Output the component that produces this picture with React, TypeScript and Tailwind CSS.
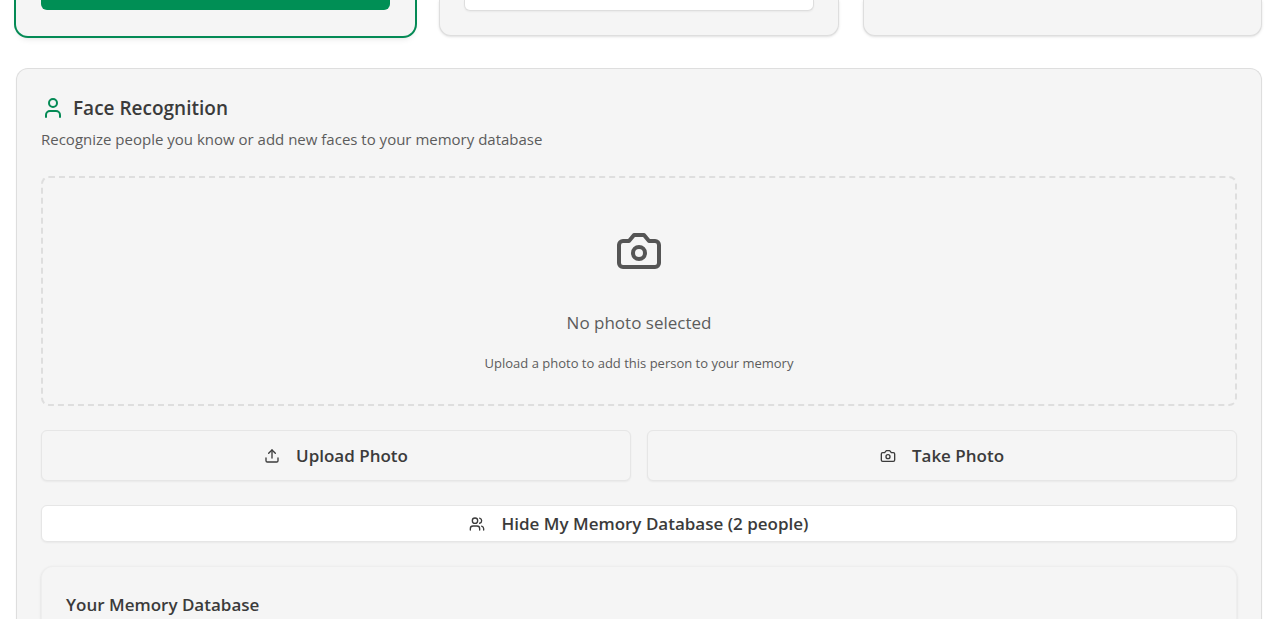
import type { ReactNode } from "react";
import { Upload, User, Users } from "lucide-react";

function CameraIcon({ className }: { className?: string }) {
  return (
    <svg
      viewBox="0 0 24 24"
      fill="none"
      stroke="currentColor"
      strokeWidth="2"
      strokeLinecap="round"
      strokeLinejoin="round"
      className={className}
      aria-hidden="true"
    >
      <path d="M14.5 4h-5L7 7H4a2 2 0 0 0-2 2v9a2 2 0 0 0 2 2h16a2 2 0 0 0 2-2V9a2 2 0 0 0-2-2h-3l-2.5-3z" />
      <circle cx="12" cy="13" r="3" />
    </svg>
  );
}

function ActionButton({ icon, label }: { icon: ReactNode; label: string }) {
  return (
    <button
      type="button"
      className="flex flex-1 items-center justify-center gap-4 rounded-md border border-[#e6e6e6] bg-[#f5f5f5] py-3 text-[17px] leading-[25px] font-semibold shadow-xs hover:bg-white"
    >
      {icon}
      {label}
    </button>
  );
}

export default function App() {
  return (
    <main className="flex min-h-screen flex-col gap-8 bg-white pr-[18px] pl-4 font-['Open_Sans','Noto_Sans',sans-serif] text-[#3b3b3b]">
      <div className="grid grid-cols-3 gap-6">
        <div className="rounded-b-xl bg-[#f5f5f5] px-[25px] pb-[26px] shadow-md ring-2 ring-[#048a55]">
          <div className="h-[10px] rounded-b-md bg-[#008f55]" />
        </div>
        <div className="rounded-b-xl border border-t-0 border-[#dedede] bg-[#f5f5f5] px-6 pb-6 shadow-sm">
          <div className="h-[11px] rounded-b-md border border-t-0 border-[#dedede] bg-white shadow-xs" />
        </div>
        <div className="rounded-b-xl border border-t-0 border-[#dedede] bg-[#f5f5f5] shadow-sm" />
      </div>

      <section className="flex grow flex-col gap-6 rounded-t-xl border border-b-0 border-[#dedede] bg-[#f5f5f5] px-6 pt-6 shadow-xs">
        <header>
          <h2 className="flex items-center gap-2 text-[19px] leading-[30px] font-semibold">
            <User className="size-6 text-[#048a55]" />
            Face Recognition
          </h2>
          <p className="mt-1 text-[15px] leading-[25px] text-[#5c5c5c]">
            Recognize people you know or add new faces to your memory database
          </p>
        </header>

        <div className="flex flex-col items-center rounded-lg border-2 border-dashed border-[#dedede] px-8 pt-[49px] pb-[29px] text-[#5c5c5c]">
          <CameraIcon className="size-12 text-[#555555]" />
          <p className="mt-8 text-[17px] leading-8">No photo selected</p>
          <p className="mt-3 text-[13px] leading-6">Upload a photo to add this person to your memory</p>
        </div>

        <div className="flex gap-4">
          <ActionButton icon={<Upload className="size-4" />} label="Upload Photo" />
          <ActionButton icon={<CameraIcon className="size-4" />} label="Take Photo" />
        </div>

        <button
          type="button"
          className="flex h-[37px] shrink-0 items-center justify-center gap-4 rounded-md border border-[#e6e6e6] bg-white text-[17px] font-semibold shadow-xs hover:bg-gray-50"
        >
          <Users className="size-4" />
          Hide My Memory Database (2 people)
        </button>

        <div className="grow rounded-t-xl border border-b-0 border-[#eeeeee] bg-[#f5f5f5] px-6 pt-6 shadow-sm">
          <h3 className="text-[17px] leading-7 font-semibold">Your Memory Database</h3>
        </div>
      </section>
    </main>
  );
}
